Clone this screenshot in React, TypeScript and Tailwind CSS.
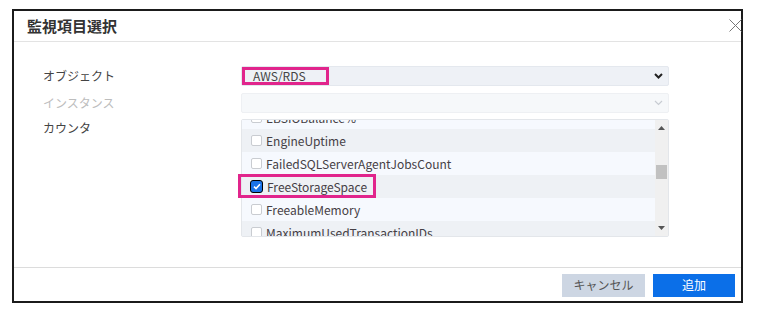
import { Fragment } from 'react';

const font = { fontFamily: '"Noto Sans CJK JP", "Noto Sans", sans-serif' };

const counters = [
  { name: 'EBSIOBalance%', checked: false },
  { name: 'EngineUptime', checked: false },
  { name: 'FailedSQLServerAgentJobsCount', checked: false },
  { name: 'FreeStorageSpace', checked: true },
  { name: 'FreeableMemory', checked: false },
  { name: 'MaximumUsedTransactionIDs', checked: false },
];

const Chevron = ({ light }: { light?: boolean }) => (
  <svg width="9" height="6" viewBox="0 0 9 6" className="shrink-0">
    <path
      d="M1 1 L4.5 4.5 L8 1"
      fill="none"
      stroke={light ? '#c8ccd2' : '#222'}
      strokeWidth={light ? 1.2 : 2}
    />
  </svg>
);

const Checkbox = ({ checked }: { checked: boolean }) =>
  checked ? (
    <span className="flex h-[13px] w-[13px] items-center justify-center rounded-[3px] border-[1.5px] border-black bg-[#1a73e8]">
      <svg width="8" height="7" viewBox="0 0 8 7">
        <path d="M1 3.6 L3 5.5 L7 1.2" fill="none" stroke="#fff" strokeWidth="1.6" />
      </svg>
    </span>
  ) : (
    <span className="ml-[1px] h-[11px] w-[11px] rounded-[2px] border border-[#c9ccd1] bg-white" />
  );

const App = () => {
  return (
    <div className="h-[314px] w-[766px] bg-white pl-[12px] pt-[9px]" style={font}>
      <div className="relative flex h-[294px] w-[731px] flex-col border-2 border-[#1b1b1b] bg-white">
        <div className="flex h-[31px] shrink-0 items-center border-b border-[#e3e3e3] pl-[13px]">
          <h2 className="text-[15px] font-bold text-[#333]">監視項目選択</h2>
        </div>
        <svg
          width="13"
          height="13"
          viewBox="0 0 13 13"
          className="absolute right-[-1px] top-[8px]"
        >
          <path d="M0.5 0.5 L12.5 12.5 M12.5 0.5 L0.5 12.5" stroke="#777" strokeWidth="1" />
        </svg>

        <div className="flex-1 pl-[29px] pt-[24px]">
          <div className="grid grid-cols-[198px_428px] gap-y-[7px] text-[12px]">
            <div className="flex h-[20px] items-center text-[#444]">オブジェクト</div>
            <div className="relative flex h-[20px] items-center justify-between rounded-[2px] border border-[#e4e8ee] bg-[#eef1f6] pl-[11px] pr-[5px] text-[#444]">
              <span>AWS/RDS</span>
              <Chevron />
              <div className="absolute left-[0px] top-[0px] h-[18px] w-[87px] border-[3px] border-[#e1258c]" />
            </div>

            <div className="flex h-[20px] items-center text-[#bdbdbd]">インスタンス</div>
            <div className="flex h-[20px] items-center justify-end rounded-[2px] border border-[#eef0f3] bg-[#f6f8fa] pr-[5px]">
              <Chevron light />
            </div>

            <div className="-mt-[1px] text-[#444]">
              <div className="flex h-[18px] items-center">カウンタ</div>
            </div>
            <div className="relative -mt-[1px]">
              <div className="flex h-[118px] rounded-[2px] border border-[#e3e6ea] bg-[#f6f9fd]">
                <div className="flex-1 overflow-hidden">
                  <div className="-mt-[14px]">
                    {counters.map((c, i) => (
                      <Fragment key={c.name}>
                        <div
                          className={`flex h-[23px] items-center gap-[4px] pl-[8px] text-[#454045] ${
                            i % 2 === 1 ? 'bg-[#eef1f5]' : 'bg-[#f6f9fe]'
                          }`}
                        >
                          <Checkbox checked={c.checked} />
                          <span className="whitespace-nowrap">{c.name}</span>
                        </div>
                      </Fragment>
                    ))}
                  </div>
                </div>
                <div className="relative w-[13px] shrink-0 bg-[#f0f0f0]">
                  <svg width="7" height="4" viewBox="0 0 7 4" className="absolute left-[3px] top-[6px]">
                    <path d="M0 4 L3.5 0 L7 4 Z" fill="#555" />
                  </svg>
                  <div className="absolute left-[1px] top-[45px] h-[14px] w-[11px] bg-[#c1c1c1]" />
                  <svg width="7" height="4" viewBox="0 0 7 4" className="absolute bottom-[6px] left-[3px]">
                    <path d="M0 0 L3.5 4 L7 0 Z" fill="#555" />
                  </svg>
                </div>
              </div>
              <div className="absolute left-[-3px] top-[55px] h-[24px] w-[138px] border-[3px] border-[#e1258c]" />
            </div>
          </div>
        </div>

        <div className="flex h-[34px] shrink-0 items-center justify-end gap-[8px] border-t border-[#dcdcdc] pr-[6px] pt-[1px] text-[12px]">
          <button className="h-[23px] w-[83px] bg-[#cdd6e3] text-[#555]">キャンセル</button>
          <button className="h-[23px] w-[82px] bg-[#0b6fe8] text-white">追加</button>
        </div>
      </div>
    </div>
  );
};

export default App;
